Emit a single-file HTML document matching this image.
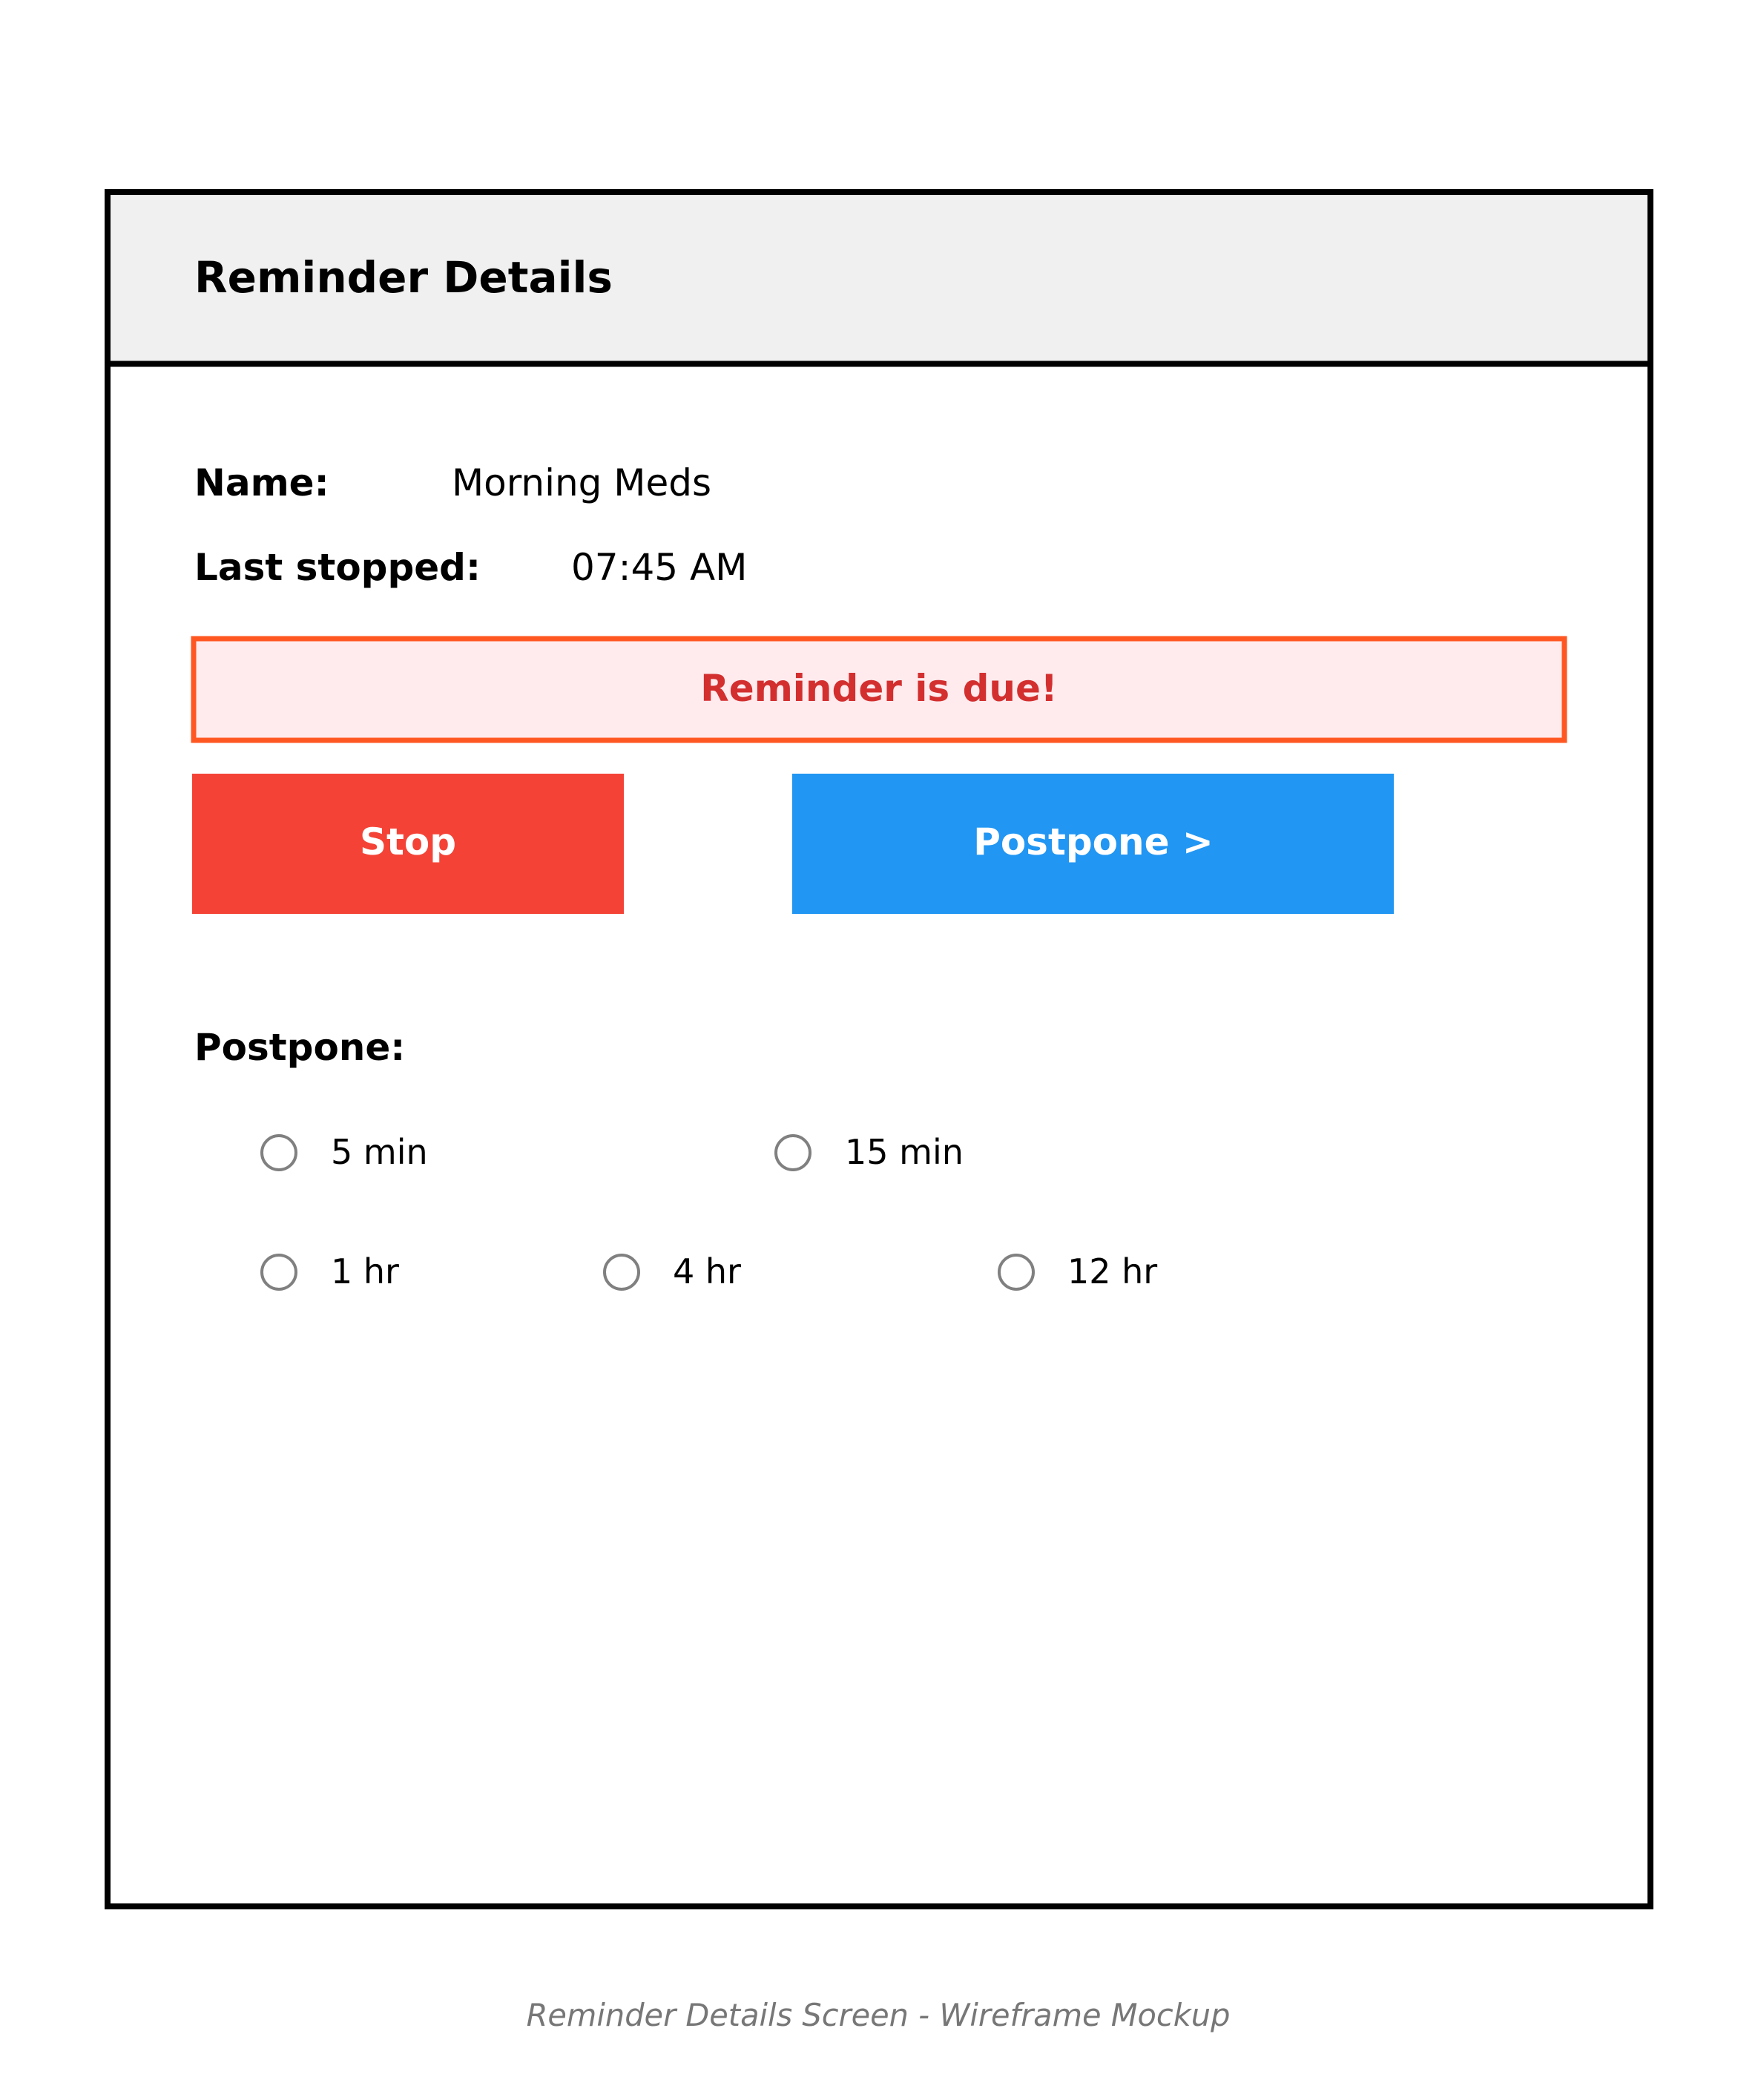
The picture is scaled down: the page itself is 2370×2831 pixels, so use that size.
<!DOCTYPE html>
<html><head><meta charset="utf-8"><style>
html,body{margin:0;padding:0;background:#fff;}
svg{display:block;}
text{font-family:"DejaVu Sans","Liberation Sans",sans-serif;}
</style></head><body>
<svg width="2370" height="2831" viewBox="0 0 2370 2831" xmlns="http://www.w3.org/2000/svg">
<rect x="0" y="0" width="2370" height="2831" fill="#fff"/>
<rect x="145" y="259" width="2080" height="232" fill="#f0f0f0"/>
<line x1="141" y1="490.5" x2="2229" y2="490.5" stroke="#000" stroke-width="8"/>
<rect x="145" y="259" width="2080" height="2311" fill="none" stroke="#000" stroke-width="8"/>
<text x="262" y="394" font-size="58" font-weight="bold">Reminder Details</text>
<text x="262" y="668" font-size="50" font-weight="bold">Name:</text>
<text x="609" y="668" font-size="50">Morning Meds</text>
<text x="262" y="782" font-size="50" font-weight="bold">Last stopped:</text>
<text x="770" y="782" font-size="50">07:45 AM</text>
<rect x="261" y="861" width="1848" height="137" fill="#ffebee" stroke="#ff5722" stroke-width="7"/>
<text x="1185" y="945" font-size="50" font-weight="bold" fill="#d32f2f" text-anchor="middle">Reminder is due!</text>
<rect x="259" y="1043" width="582" height="189" fill="#f44336"/>
<text x="550" y="1152" font-size="50" font-weight="bold" fill="#fff" text-anchor="middle">Stop</text>
<rect x="1068" y="1043" width="811" height="189" fill="#2196f3"/>
<text x="1474" y="1152" font-size="50" font-weight="bold" fill="#fff" text-anchor="middle">Postpone &gt;</text>
<text x="262" y="1429" font-size="50" font-weight="bold">Postpone:</text>
<g fill="none" stroke="#808080" stroke-width="4">
<circle cx="376" cy="1554" r="23"/>
<circle cx="1069" cy="1554" r="23"/>
<circle cx="376" cy="1715" r="23"/>
<circle cx="838" cy="1715" r="23"/>
<circle cx="1370" cy="1715" r="23"/>
</g>
<g font-size="46">
<text x="446" y="1569">5 min</text>
<text x="1139" y="1569">15 min</text>
<text x="446" y="1730">1 hr</text>
<text x="907" y="1730">4 hr</text>
<text x="1439" y="1730">12 hr</text>
</g>
<text x="1184" y="2731" font-size="41.5" font-style="italic" fill="#777" text-anchor="middle">Reminder Details Screen - Wireframe Mockup</text>
</svg>
</body></html>
